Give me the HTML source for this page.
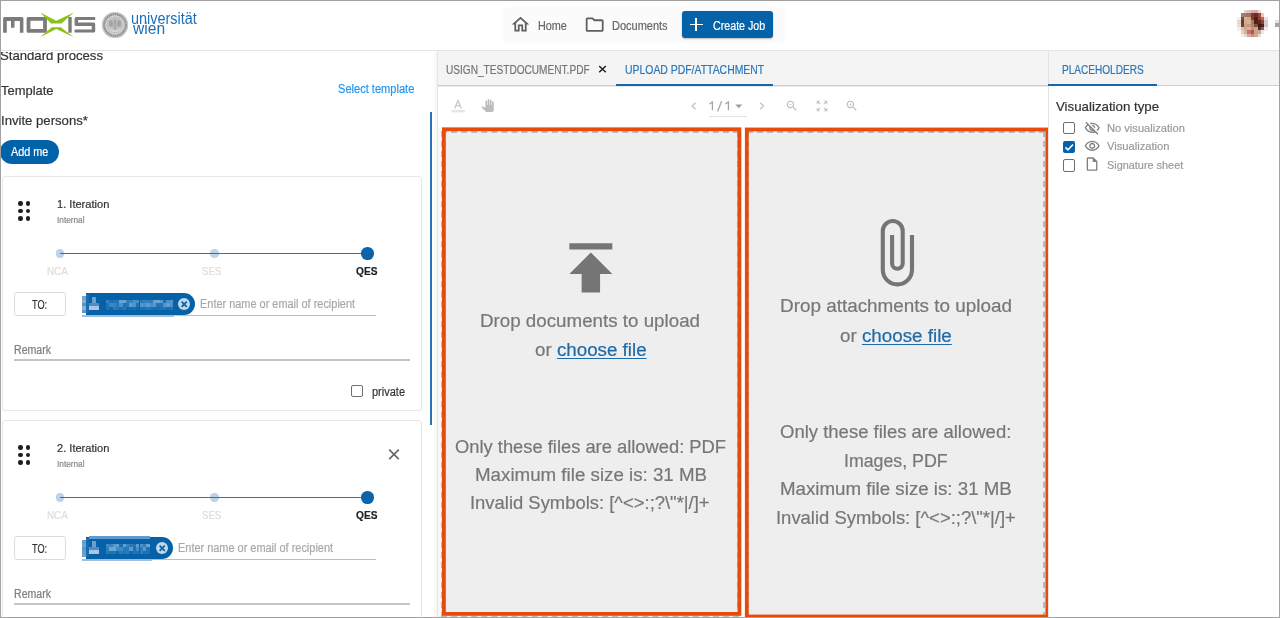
<!DOCTYPE html>
<html><head><meta charset="utf-8"><style>
html,body{margin:0;padding:0;}
body{width:1280px;height:618px;overflow:hidden;position:relative;background:#fff;font-family:"Liberation Sans",sans-serif;}
.t{position:absolute;white-space:nowrap;-webkit-text-stroke:0.2px currentColor;}
#frame{position:absolute;left:0;top:0;width:1280px;height:618px;border:1px solid #a2a2a2;box-sizing:border-box;pointer-events:none;z-index:50;}
</style></head><body>
<div id="left" style="position:absolute;left:0;top:0;width:437px;height:618px;overflow:hidden;">
<div class="t" style="left:0.00px;top:49.10px;font-size:13px;line-height:13px;color:#333;transform:scaleX(1.0109);transform-origin:0 0;">Standard process</div>
<div style="position:absolute;left:0px;top:51px;width:437px;height:1.2px;background:#fff;"></div>
<div class="t" style="left:0.50px;top:83.80px;font-size:13px;line-height:13px;color:#333;transform:scaleX(0.9952);transform-origin:0 0;">Template</div>
<div class="t" style="left:337.70px;top:83.40px;font-size:12px;line-height:12px;color:#2196f3;transform:scaleX(0.9224);transform-origin:0 0;">Select template</div>
<div class="t" style="left:0.50px;top:114.30px;font-size:13px;line-height:13px;color:#333;transform:scaleX(1.0105);transform-origin:0 0;">Invite persons*</div>
<div style="position:absolute;left:0px;top:140px;width:59px;height:24px;background:#0062a8;border-radius:12px;"></div>
<div class="t" style="left:10.50px;top:145.60px;font-size:12px;line-height:12px;color:#fff;transform:scaleX(0.9020);transform-origin:0 0;">Add me</div>
<div style="position:absolute;left:430px;top:112px;width:2px;height:313px;background:#2a74b3;"></div>
<div style="position:absolute;left:2px;top:176px;width:419.5px;height:234.5px;border:1px solid #e6e6e6;border-radius:3px;box-sizing:border-box;background:#fff;"></div>
<div style="position:absolute;left:18.0px;top:201.39999999999998px;width:4.6px;height:4.6px;background:#1e1e1e;border-radius:50%;"></div>
<div style="position:absolute;left:18.0px;top:208.7px;width:4.6px;height:4.6px;background:#1e1e1e;border-radius:50%;"></div>
<div style="position:absolute;left:18.0px;top:216.0px;width:4.6px;height:4.6px;background:#1e1e1e;border-radius:50%;"></div>
<div style="position:absolute;left:25.7px;top:201.39999999999998px;width:4.6px;height:4.6px;background:#1e1e1e;border-radius:50%;"></div>
<div style="position:absolute;left:25.7px;top:208.7px;width:4.6px;height:4.6px;background:#1e1e1e;border-radius:50%;"></div>
<div style="position:absolute;left:25.7px;top:216.0px;width:4.6px;height:4.6px;background:#1e1e1e;border-radius:50%;"></div>
<div class="t" style="left:57.00px;top:198.80px;font-size:11px;line-height:11px;color:#333;transform:scaleX(1.0063);transform-origin:0 0;">1. Iteration</div>
<div class="t" style="left:57.00px;top:216.20px;font-size:9px;line-height:9px;color:#888;transform:scaleX(0.9162);transform-origin:0 0;">Internal</div>
<div style="position:absolute;left:55.7px;top:249.4px;width:8.4px;height:8.4px;background:#bcd3e8;border-radius:50%;"></div>
<div style="position:absolute;left:210.4px;top:249.4px;width:8.4px;height:8.4px;background:#bcd3e8;border-radius:50%;"></div>
<div style="position:absolute;left:60px;top:252.8px;width:307px;height:1.6px;background:#2a72b3;"></div>
<div style="position:absolute;left:361px;top:247.3px;width:12.6px;height:12.6px;background:#0b63a9;border-radius:50%;"></div>
<div class="t" style="left:46.80px;top:266.00px;font-size:11px;line-height:11px;color:#dcdcdc;transform:scaleX(0.8914);transform-origin:0 0;">NCA</div>
<div class="t" style="left:202.00px;top:265.90px;font-size:11px;line-height:11px;color:#dcdcdc;transform:scaleX(0.8768);transform-origin:0 0;">SES</div>
<div class="t" style="left:356.00px;top:265.60px;font-size:11px;line-height:11px;color:#222;transform:scaleX(0.9211);transform-origin:0 0;font-weight:bold;">QES</div>
<div style="position:absolute;left:13.6px;top:292px;width:52px;height:24.3px;border:1px solid #dcdcdc;border-radius:3px;box-sizing:border-box;"></div>
<div class="t" style="left:32.20px;top:299.10px;font-size:12px;line-height:12px;color:#333;transform:scaleX(0.7636);transform-origin:0 0;">TO:</div>
<div style="position:absolute;left:86px;top:293px;width:108.8px;height:21.5px;background:#0562a8;border-radius:0 11px 11px 0;"></div>
<div style="position:absolute;left:82.3px;top:296.3px;width:3.4px;height:3.4px;background:rgba(5,98,168,0.56);"></div>
<div style="position:absolute;left:82.3px;top:299.6px;width:3.4px;height:3.4px;background:rgba(5,98,168,0.50);"></div>
<div style="position:absolute;left:82.3px;top:302.9px;width:3.4px;height:3.4px;background:rgba(5,98,168,0.68);"></div>
<div style="position:absolute;left:82.3px;top:306.2px;width:3.4px;height:3.4px;background:rgba(5,98,168,0.48);"></div>
<div style="position:absolute;left:82.3px;top:309.5px;width:3.4px;height:3.4px;background:rgba(5,98,168,0.64);"></div>
<div style="position:absolute;left:85.7px;top:294px;width:3.4px;height:19px;background:#1a6cae;"></div>
<div style="position:absolute;left:92.2px;top:296.5px;width:3.4px;height:6.6px;background:#6c9fcf;"></div>
<div style="position:absolute;left:88.8px;top:303.1px;width:10.2px;height:3.3px;background:#4f8cc4;"></div>
<div style="position:absolute;left:88.8px;top:306.4px;width:10.2px;height:3.3px;background:#a9c7e4;"></div>
<div style="position:absolute;left:106.0px;top:300.0px;width:3.4px;height:3.4px;background:rgba(140,190,232,0.37);"></div>
<div style="position:absolute;left:106.0px;top:303.3px;width:3.4px;height:3.4px;background:rgba(140,190,232,0.18);"></div>
<div style="position:absolute;left:106.0px;top:306.6px;width:3.4px;height:3.4px;background:rgba(140,190,232,0.18);"></div>
<div style="position:absolute;left:109.3px;top:300.0px;width:3.4px;height:3.4px;background:rgba(140,190,232,0.17);"></div>
<div style="position:absolute;left:109.3px;top:303.3px;width:3.4px;height:3.4px;background:rgba(140,190,232,0.41);"></div>
<div style="position:absolute;left:109.3px;top:306.6px;width:3.4px;height:3.4px;background:rgba(140,190,232,0.07);"></div>
<div style="position:absolute;left:112.7px;top:300.0px;width:3.4px;height:3.4px;background:rgba(140,190,232,0.20);"></div>
<div style="position:absolute;left:112.7px;top:303.3px;width:3.4px;height:3.4px;background:rgba(140,190,232,0.40);"></div>
<div style="position:absolute;left:112.7px;top:306.6px;width:3.4px;height:3.4px;background:rgba(140,190,232,0.26);"></div>
<div style="position:absolute;left:116.0px;top:300.0px;width:3.4px;height:3.4px;background:rgba(140,190,232,0.22);"></div>
<div style="position:absolute;left:116.0px;top:303.3px;width:3.4px;height:3.4px;background:rgba(140,190,232,0.28);"></div>
<div style="position:absolute;left:116.0px;top:306.6px;width:3.4px;height:3.4px;background:rgba(140,190,232,0.21);"></div>
<div style="position:absolute;left:119.4px;top:300.0px;width:3.4px;height:3.4px;background:rgba(140,190,232,0.72);"></div>
<div style="position:absolute;left:119.4px;top:303.3px;width:3.4px;height:3.4px;background:rgba(140,190,232,0.50);"></div>
<div style="position:absolute;left:119.4px;top:306.6px;width:3.4px;height:3.4px;background:rgba(140,190,232,0.15);"></div>
<div style="position:absolute;left:122.7px;top:300.0px;width:3.4px;height:3.4px;background:rgba(140,190,232,0.74);"></div>
<div style="position:absolute;left:122.7px;top:303.3px;width:3.4px;height:3.4px;background:rgba(140,190,232,0.18);"></div>
<div style="position:absolute;left:122.7px;top:306.6px;width:3.4px;height:3.4px;background:rgba(140,190,232,0.26);"></div>
<div style="position:absolute;left:126.1px;top:300.0px;width:3.4px;height:3.4px;background:rgba(140,190,232,0.32);"></div>
<div style="position:absolute;left:126.1px;top:303.3px;width:3.4px;height:3.4px;background:rgba(140,190,232,0.24);"></div>
<div style="position:absolute;left:126.1px;top:306.6px;width:3.4px;height:3.4px;background:rgba(140,190,232,0.08);"></div>
<div style="position:absolute;left:129.4px;top:300.0px;width:3.4px;height:3.4px;background:rgba(140,190,232,0.34);"></div>
<div style="position:absolute;left:129.4px;top:303.3px;width:3.4px;height:3.4px;background:rgba(140,190,232,0.64);"></div>
<div style="position:absolute;left:129.4px;top:306.6px;width:3.4px;height:3.4px;background:rgba(140,190,232,0.10);"></div>
<div style="position:absolute;left:132.8px;top:300.0px;width:3.4px;height:3.4px;background:rgba(140,190,232,0.50);"></div>
<div style="position:absolute;left:132.8px;top:303.3px;width:3.4px;height:3.4px;background:rgba(140,190,232,0.53);"></div>
<div style="position:absolute;left:132.8px;top:306.6px;width:3.4px;height:3.4px;background:rgba(140,190,232,0.14);"></div>
<div style="position:absolute;left:136.1px;top:300.0px;width:3.4px;height:3.4px;background:rgba(140,190,232,0.48);"></div>
<div style="position:absolute;left:136.1px;top:303.3px;width:3.4px;height:3.4px;background:rgba(140,190,232,0.19);"></div>
<div style="position:absolute;left:136.1px;top:306.6px;width:3.4px;height:3.4px;background:rgba(140,190,232,0.06);"></div>
<div style="position:absolute;left:139.5px;top:300.0px;width:3.4px;height:3.4px;background:rgba(140,190,232,0.27);"></div>
<div style="position:absolute;left:139.5px;top:303.3px;width:3.4px;height:3.4px;background:rgba(140,190,232,0.56);"></div>
<div style="position:absolute;left:139.5px;top:306.6px;width:3.4px;height:3.4px;background:rgba(140,190,232,0.16);"></div>
<div style="position:absolute;left:142.8px;top:300.0px;width:3.4px;height:3.4px;background:rgba(140,190,232,0.34);"></div>
<div style="position:absolute;left:142.8px;top:303.3px;width:3.4px;height:3.4px;background:rgba(140,190,232,0.50);"></div>
<div style="position:absolute;left:142.8px;top:306.6px;width:3.4px;height:3.4px;background:rgba(140,190,232,0.16);"></div>
<div style="position:absolute;left:146.2px;top:300.0px;width:3.4px;height:3.4px;background:rgba(140,190,232,0.33);"></div>
<div style="position:absolute;left:146.2px;top:303.3px;width:3.4px;height:3.4px;background:rgba(140,190,232,0.63);"></div>
<div style="position:absolute;left:146.2px;top:306.6px;width:3.4px;height:3.4px;background:rgba(140,190,232,0.22);"></div>
<div style="position:absolute;left:149.5px;top:300.0px;width:3.4px;height:3.4px;background:rgba(140,190,232,0.30);"></div>
<div style="position:absolute;left:149.5px;top:303.3px;width:3.4px;height:3.4px;background:rgba(140,190,232,0.49);"></div>
<div style="position:absolute;left:149.5px;top:306.6px;width:3.4px;height:3.4px;background:rgba(140,190,232,0.18);"></div>
<div style="position:absolute;left:152.9px;top:300.0px;width:3.4px;height:3.4px;background:rgba(140,190,232,0.68);"></div>
<div style="position:absolute;left:152.9px;top:303.3px;width:3.4px;height:3.4px;background:rgba(140,190,232,0.59);"></div>
<div style="position:absolute;left:152.9px;top:306.6px;width:3.4px;height:3.4px;background:rgba(140,190,232,0.12);"></div>
<div style="position:absolute;left:156.2px;top:300.0px;width:3.4px;height:3.4px;background:rgba(140,190,232,0.74);"></div>
<div style="position:absolute;left:156.2px;top:303.3px;width:3.4px;height:3.4px;background:rgba(140,190,232,0.22);"></div>
<div style="position:absolute;left:156.2px;top:306.6px;width:3.4px;height:3.4px;background:rgba(140,190,232,0.15);"></div>
<div style="position:absolute;left:159.6px;top:300.0px;width:3.4px;height:3.4px;background:rgba(140,190,232,0.60);"></div>
<div style="position:absolute;left:159.6px;top:303.3px;width:3.4px;height:3.4px;background:rgba(140,190,232,0.24);"></div>
<div style="position:absolute;left:159.6px;top:306.6px;width:3.4px;height:3.4px;background:rgba(140,190,232,0.17);"></div>
<div style="position:absolute;left:162.9px;top:300.0px;width:3.4px;height:3.4px;background:rgba(140,190,232,0.17);"></div>
<div style="position:absolute;left:162.9px;top:303.3px;width:3.4px;height:3.4px;background:rgba(140,190,232,0.55);"></div>
<div style="position:absolute;left:162.9px;top:306.6px;width:3.4px;height:3.4px;background:rgba(140,190,232,0.24);"></div>
<div style="position:absolute;left:166.3px;top:300.0px;width:3.4px;height:3.4px;background:rgba(140,190,232,0.49);"></div>
<div style="position:absolute;left:166.3px;top:303.3px;width:3.4px;height:3.4px;background:rgba(140,190,232,0.68);"></div>
<div style="position:absolute;left:166.3px;top:306.6px;width:3.4px;height:3.4px;background:rgba(140,190,232,0.13);"></div>
<div style="position:absolute;left:169.6px;top:300.0px;width:3.4px;height:3.4px;background:rgba(140,190,232,0.57);"></div>
<div style="position:absolute;left:169.6px;top:303.3px;width:3.4px;height:3.4px;background:rgba(140,190,232,0.51);"></div>
<div style="position:absolute;left:169.6px;top:306.6px;width:3.4px;height:3.4px;background:rgba(140,190,232,0.19);"></div>
<div style="position:absolute;left:82.3px;top:314.5px;width:91.5px;height:2.3px;background:#9fbcd9;"></div>
<div style="position:absolute;left:177.90000000000003px;top:297.6px;width:12.4px;height:12.4px;background:#c3d7ea;border-radius:50%;"></div>
<svg style="position:absolute;left:177.90px;top:297.60px" width="12.4" height="12.4" viewBox="0 0 12.4 12.4"><path d="M3.6 3.6L8.8 8.8M8.8 3.6L3.6 8.8" stroke="#0562a8" stroke-width="1.7"/></svg>
<div class="t" style="left:199.80px;top:297.70px;font-size:12px;line-height:12px;color:#a8a8a8;transform:scaleX(0.9114);transform-origin:0 0;">Enter name or email of recipient</div>
<div style="position:absolute;left:173.8px;top:315px;width:202.2px;height:1px;background:#bdbdbd;"></div>
<div class="t" style="left:13.90px;top:343.60px;font-size:12px;line-height:12px;color:#7c7c7c;transform:scaleX(0.8802);transform-origin:0 0;">Remark</div>
<div style="position:absolute;left:13.9px;top:359px;width:396.3px;height:1.6px;background:#c4c4c4;"></div>
<div style="position:absolute;left:351px;top:384.7px;width:12px;height:12px;border:1.7px solid #6e6e6e;border-radius:2px;box-sizing:border-box;"></div>
<div class="t" style="left:371.70px;top:385.80px;font-size:12px;line-height:12px;color:#333;transform:scaleX(0.9164);transform-origin:0 0;">private</div>
<div style="position:absolute;left:2px;top:420px;width:419.5px;height:234.5px;border:1px solid #e6e6e6;border-radius:3px;box-sizing:border-box;background:#fff;"></div>
<div style="position:absolute;left:18.0px;top:445.4px;width:4.6px;height:4.6px;background:#1e1e1e;border-radius:50%;"></div>
<div style="position:absolute;left:18.0px;top:452.7px;width:4.6px;height:4.6px;background:#1e1e1e;border-radius:50%;"></div>
<div style="position:absolute;left:18.0px;top:460.0px;width:4.6px;height:4.6px;background:#1e1e1e;border-radius:50%;"></div>
<div style="position:absolute;left:25.7px;top:445.4px;width:4.6px;height:4.6px;background:#1e1e1e;border-radius:50%;"></div>
<div style="position:absolute;left:25.7px;top:452.7px;width:4.6px;height:4.6px;background:#1e1e1e;border-radius:50%;"></div>
<div style="position:absolute;left:25.7px;top:460.0px;width:4.6px;height:4.6px;background:#1e1e1e;border-radius:50%;"></div>
<div class="t" style="left:57.00px;top:442.80px;font-size:11px;line-height:11px;color:#333;transform:scaleX(1.0063);transform-origin:0 0;">2. Iteration</div>
<div class="t" style="left:57.00px;top:460.20px;font-size:9px;line-height:9px;color:#888;transform:scaleX(0.9162);transform-origin:0 0;">Internal</div>
<div style="position:absolute;left:55.7px;top:493.4px;width:8.4px;height:8.4px;background:#bcd3e8;border-radius:50%;"></div>
<div style="position:absolute;left:210.4px;top:493.4px;width:8.4px;height:8.4px;background:#bcd3e8;border-radius:50%;"></div>
<div style="position:absolute;left:60px;top:496.8px;width:307px;height:1.6px;background:#2a72b3;"></div>
<div style="position:absolute;left:361px;top:491.3px;width:12.6px;height:12.6px;background:#0b63a9;border-radius:50%;"></div>
<div class="t" style="left:46.80px;top:510.00px;font-size:11px;line-height:11px;color:#dcdcdc;transform:scaleX(0.8914);transform-origin:0 0;">NCA</div>
<div class="t" style="left:202.00px;top:509.90px;font-size:11px;line-height:11px;color:#dcdcdc;transform:scaleX(0.8768);transform-origin:0 0;">SES</div>
<div class="t" style="left:356.00px;top:509.60px;font-size:11px;line-height:11px;color:#222;transform:scaleX(0.9211);transform-origin:0 0;font-weight:bold;">QES</div>
<div style="position:absolute;left:13.6px;top:536px;width:52px;height:24.3px;border:1px solid #dcdcdc;border-radius:3px;box-sizing:border-box;"></div>
<div class="t" style="left:32.20px;top:543.10px;font-size:12px;line-height:12px;color:#333;transform:scaleX(0.7636);transform-origin:0 0;">TO:</div>
<div style="position:absolute;left:86px;top:537px;width:87.0px;height:21.5px;background:#0562a8;border-radius:0 11px 11px 0;"></div>
<div style="position:absolute;left:82.3px;top:540.3px;width:3.4px;height:3.4px;background:rgba(5,98,168,0.61);"></div>
<div style="position:absolute;left:82.3px;top:543.6px;width:3.4px;height:3.4px;background:rgba(5,98,168,0.58);"></div>
<div style="position:absolute;left:82.3px;top:546.9px;width:3.4px;height:3.4px;background:rgba(5,98,168,0.65);"></div>
<div style="position:absolute;left:82.3px;top:550.2px;width:3.4px;height:3.4px;background:rgba(5,98,168,0.61);"></div>
<div style="position:absolute;left:82.3px;top:553.5px;width:3.4px;height:3.4px;background:rgba(5,98,168,0.59);"></div>
<div style="position:absolute;left:85.7px;top:538px;width:3.4px;height:19px;background:#1a6cae;"></div>
<div style="position:absolute;left:92.2px;top:540.5px;width:3.4px;height:6.6px;background:#6c9fcf;"></div>
<div style="position:absolute;left:88.8px;top:547.1px;width:10.2px;height:3.3px;background:#4f8cc4;"></div>
<div style="position:absolute;left:88.8px;top:550.4px;width:10.2px;height:3.3px;background:#a9c7e4;"></div>
<div style="position:absolute;left:106.0px;top:544.0px;width:3.4px;height:3.4px;background:rgba(140,190,232,0.44);"></div>
<div style="position:absolute;left:106.0px;top:547.3px;width:3.4px;height:3.4px;background:rgba(140,190,232,0.31);"></div>
<div style="position:absolute;left:106.0px;top:550.6px;width:3.4px;height:3.4px;background:rgba(140,190,232,0.28);"></div>
<div style="position:absolute;left:109.3px;top:544.0px;width:3.4px;height:3.4px;background:rgba(140,190,232,0.39);"></div>
<div style="position:absolute;left:109.3px;top:547.3px;width:3.4px;height:3.4px;background:rgba(140,190,232,0.74);"></div>
<div style="position:absolute;left:109.3px;top:550.6px;width:3.4px;height:3.4px;background:rgba(140,190,232,0.18);"></div>
<div style="position:absolute;left:112.7px;top:544.0px;width:3.4px;height:3.4px;background:rgba(140,190,232,0.59);"></div>
<div style="position:absolute;left:112.7px;top:547.3px;width:3.4px;height:3.4px;background:rgba(140,190,232,0.75);"></div>
<div style="position:absolute;left:112.7px;top:550.6px;width:3.4px;height:3.4px;background:rgba(140,190,232,0.20);"></div>
<div style="position:absolute;left:116.0px;top:544.0px;width:3.4px;height:3.4px;background:rgba(140,190,232,0.69);"></div>
<div style="position:absolute;left:116.0px;top:547.3px;width:3.4px;height:3.4px;background:rgba(140,190,232,0.42);"></div>
<div style="position:absolute;left:116.0px;top:550.6px;width:3.4px;height:3.4px;background:rgba(140,190,232,0.09);"></div>
<div style="position:absolute;left:119.4px;top:544.0px;width:3.4px;height:3.4px;background:rgba(140,190,232,0.15);"></div>
<div style="position:absolute;left:119.4px;top:547.3px;width:3.4px;height:3.4px;background:rgba(140,190,232,0.44);"></div>
<div style="position:absolute;left:119.4px;top:550.6px;width:3.4px;height:3.4px;background:rgba(140,190,232,0.25);"></div>
<div style="position:absolute;left:122.7px;top:544.0px;width:3.4px;height:3.4px;background:rgba(140,190,232,0.67);"></div>
<div style="position:absolute;left:122.7px;top:547.3px;width:3.4px;height:3.4px;background:rgba(140,190,232,0.27);"></div>
<div style="position:absolute;left:122.7px;top:550.6px;width:3.4px;height:3.4px;background:rgba(140,190,232,0.20);"></div>
<div style="position:absolute;left:126.1px;top:544.0px;width:3.4px;height:3.4px;background:rgba(140,190,232,0.40);"></div>
<div style="position:absolute;left:126.1px;top:547.3px;width:3.4px;height:3.4px;background:rgba(140,190,232,0.25);"></div>
<div style="position:absolute;left:126.1px;top:550.6px;width:3.4px;height:3.4px;background:rgba(140,190,232,0.29);"></div>
<div style="position:absolute;left:129.4px;top:544.0px;width:3.4px;height:3.4px;background:rgba(140,190,232,0.27);"></div>
<div style="position:absolute;left:129.4px;top:547.3px;width:3.4px;height:3.4px;background:rgba(140,190,232,0.63);"></div>
<div style="position:absolute;left:129.4px;top:550.6px;width:3.4px;height:3.4px;background:rgba(140,190,232,0.09);"></div>
<div style="position:absolute;left:132.8px;top:544.0px;width:3.4px;height:3.4px;background:rgba(140,190,232,0.22);"></div>
<div style="position:absolute;left:132.8px;top:547.3px;width:3.4px;height:3.4px;background:rgba(140,190,232,0.16);"></div>
<div style="position:absolute;left:132.8px;top:550.6px;width:3.4px;height:3.4px;background:rgba(140,190,232,0.21);"></div>
<div style="position:absolute;left:136.1px;top:544.0px;width:3.4px;height:3.4px;background:rgba(140,190,232,0.63);"></div>
<div style="position:absolute;left:136.1px;top:547.3px;width:3.4px;height:3.4px;background:rgba(140,190,232,0.47);"></div>
<div style="position:absolute;left:136.1px;top:550.6px;width:3.4px;height:3.4px;background:rgba(140,190,232,0.20);"></div>
<div style="position:absolute;left:139.5px;top:544.0px;width:3.4px;height:3.4px;background:rgba(140,190,232,0.51);"></div>
<div style="position:absolute;left:139.5px;top:547.3px;width:3.4px;height:3.4px;background:rgba(140,190,232,0.28);"></div>
<div style="position:absolute;left:139.5px;top:550.6px;width:3.4px;height:3.4px;background:rgba(140,190,232,0.29);"></div>
<div style="position:absolute;left:142.8px;top:544.0px;width:3.4px;height:3.4px;background:rgba(140,190,232,0.33);"></div>
<div style="position:absolute;left:142.8px;top:547.3px;width:3.4px;height:3.4px;background:rgba(140,190,232,0.59);"></div>
<div style="position:absolute;left:142.8px;top:550.6px;width:3.4px;height:3.4px;background:rgba(140,190,232,0.16);"></div>
<div style="position:absolute;left:146.2px;top:544.0px;width:3.4px;height:3.4px;background:rgba(140,190,232,0.73);"></div>
<div style="position:absolute;left:146.2px;top:547.3px;width:3.4px;height:3.4px;background:rgba(140,190,232,0.19);"></div>
<div style="position:absolute;left:146.2px;top:550.6px;width:3.4px;height:3.4px;background:rgba(140,190,232,0.16);"></div>
<div style="position:absolute;left:88.5px;top:535.5px;width:61.7px;height:3px;background:#5f9bd0;"></div>
<div style="position:absolute;left:82.3px;top:558.5px;width:69.7px;height:2.3px;background:#9fbcd9;"></div>
<div style="position:absolute;left:156.10000000000002px;top:541.6px;width:12.4px;height:12.4px;background:#c3d7ea;border-radius:50%;"></div>
<svg style="position:absolute;left:156.10px;top:541.60px" width="12.4" height="12.4" viewBox="0 0 12.4 12.4"><path d="M3.6 3.6L8.8 8.8M8.8 3.6L3.6 8.8" stroke="#0562a8" stroke-width="1.7"/></svg>
<div class="t" style="left:178.00px;top:541.70px;font-size:12px;line-height:12px;color:#a8a8a8;transform:scaleX(0.9114);transform-origin:0 0;">Enter name or email of recipient</div>
<div style="position:absolute;left:152.0px;top:559px;width:224.0px;height:1px;background:#bdbdbd;"></div>
<div class="t" style="left:13.90px;top:587.60px;font-size:12px;line-height:12px;color:#7c7c7c;transform:scaleX(0.8802);transform-origin:0 0;">Remark</div>
<div style="position:absolute;left:13.9px;top:603px;width:396.3px;height:1.6px;background:#c4c4c4;"></div>
<svg style="position:absolute;left:388px;top:448px" width="12" height="12" viewBox="0 0 12 12"><path d="M1.2 1.6L10.8 11.1M10.8 1.6L1.2 11.1" stroke="#666" stroke-width="1.6"/></svg>
</div>
<div id="mid">
<div style="position:absolute;left:437px;top:51px;width:843px;height:567px;background:#fff;"></div>
<div style="position:absolute;left:433px;top:53px;width:4px;height:565px;background:linear-gradient(to right,rgba(0,0,0,0),rgba(0,0,0,0.045));"></div>
<div style="position:absolute;left:437px;top:51px;width:1px;height:567px;background:#e6e6e6;"></div>
<div style="position:absolute;left:438px;top:51px;width:610px;height:34px;background:#f4f4f4;"></div>
<div style="position:absolute;left:438px;top:85px;width:610px;height:1px;background:#cfcfcf;"></div>
<div style="position:absolute;left:438px;top:86px;width:610px;height:1px;background:#eaeaea;"></div>
<div class="t" style="left:446.00px;top:63.75px;font-size:12px;line-height:12px;color:#757575;transform:scaleX(0.8414);transform-origin:0 0;">USIGN_TESTDOCUMENT.PDF</div>
<svg style="position:absolute;left:598px;top:65px" width="9" height="8" viewBox="0 0 9 8"><path d="M1.2 1L7.8 7.2M7.8 1L1.2 7.2" stroke="#222" stroke-width="1.5"/></svg>
<div class="t" style="left:624.80px;top:63.60px;font-size:12px;line-height:12px;color:#2a78ba;transform:scaleX(0.8687);transform-origin:0 0;">UPLOAD PDF/ATTACHMENT</div>
<div style="position:absolute;left:616px;top:84px;width:157px;height:2px;background:#1867ad;"></div>
<svg style="position:absolute;left:450px;top:98px" width="16" height="16" viewBox="0 0 16 16">
<path d="M4.6 10.4L8 2.6L11.4 10.4M5.8 7.6H10.2" fill="none" stroke="#c8c8c8" stroke-width="1.3"/>
<rect x="1.3" y="12" width="13.6" height="2.4" fill="#e6e6e6"/></svg>
<svg style="position:absolute;left:481.3px;top:99px" width="13.3" height="13.3" viewBox="0 0 24 24"><path d="M23 5.5V20c0 2.2-1.8 4-4 4h-7.3c-1.08 0-2.1-.43-2.850-1.19L1 14.83s1.26-1.23 1.3-1.250c.22-.19.49-.29.79-.29.22 0 .42.06.6.16.04.01 4.31 2.46 4.31 2.46V4c0-.83.67-1.5 1.5-1.5S11 3.17 11 4v7h1V1.5c0-.83.67-1.5 1.5-1.5S15 .67 15 1.5V11h1V2.5c0-.83.67-1.5 1.5-1.5s1.5.67 1.5 1.5V11h1V5.5c0-.83.67-1.5 1.5-1.5s1.5.67 1.5 1.5z" fill="#bcbcbc"/></svg>
<svg style="position:absolute;left:688px;top:101px" width="10" height="10" viewBox="0 0 10 10"><path d="M7.6 1.8L4 5L7.6 8.2" fill="none" stroke="#c2c2c2" stroke-width="1.2"/></svg>
<svg style="position:absolute;left:700px;top:95px" width="40" height="20" viewBox="700 95 40 20"><path d="M712.4 110.2V101.9L709.4 103.9M728.4 110.2V101.9L725.4 103.9M721.6 101.3L717.6 111.4" fill="none" stroke="#a4a4a4" stroke-width="1.25"/></svg>
<svg style="position:absolute;left:735px;top:103.5px" width="8" height="5" viewBox="0 0 8 5"><path d="M0.3 0.5H7.3L3.8 4.3Z" fill="#9e9e9e"/></svg>
<div style="position:absolute;left:708.5px;top:116px;width:38.3px;height:1px;background:#e4e4e4;"></div>
<svg style="position:absolute;left:757px;top:101px" width="10" height="10" viewBox="0 0 10 10"><path d="M3 1.8L6.6 5L3 8.2" fill="none" stroke="#c2c2c2" stroke-width="1.2"/></svg>
<svg style="position:absolute;left:785px;top:98.5px" width="13.7" height="13.7" viewBox="0 0 24 24"><path d="M15.5 14h-.79l-.28-.27C15.41 12.590 16 11.11 16 9.5 16 5.910 13.09 3 9.5 3S3 5.91 3 9.5 5.91 16 9.5 16c1.61 0 3.09-.59 4.23-1.57l.27.28v.79l5 4.99L20.49 19l-4.99-5zm-6 0C7.01 14 5 11.99 5 9.5S7.01 5 9.5 5 14 7.01 14 9.5 11.99 14 9.5 14zM7 9h5v1H7z" fill="#bdbdbd"/></svg>
<svg style="position:absolute;left:845.2px;top:98.5px" width="13.7" height="13.7" viewBox="0 0 24 24"><path d="M15.5 14h-.79l-.28-.27C15.41 12.590 16 11.11 16 9.5 16 5.910 13.09 3 9.5 3S3 5.91 3 9.5 5.91 16 9.5 16c1.61 0 3.09-.59 4.23-1.57l.27.28v.79l5 4.99L20.49 19l-4.99-5zm-6 0C7.01 14 5 11.99 5 9.5S7.01 5 9.5 5 14 7.01 14 9.5 11.99 14 9.5 14zM12 10h-2v2H9v-2H7V9h2V7h1v2h2v1z" fill="#bdbdbd"/></svg>
<svg style="position:absolute;left:815px;top:98.75px" width="14" height="14" viewBox="0 0 24 24"><path d="M15 3l2.3 2.3-2.89 2.87 1.42 1.42L18.7 6.7 21 9V3zM3 9l2.3-2.3 2.87 2.89 1.420-1.42L6.7 5.3 9 3H3zm6 12l-2.3-2.3 2.89-2.87-1.42-1.42L5.3 17.3 3 15v6zm12-6l-2.3 2.3-2.87-2.89-1.42 1.42 2.89 2.87L15 21h6z" fill="#c4c4c4"/></svg>
<div style="position:absolute;left:437.5px;top:127px;width:611px;height:491px;background:#f7f7f7;"></div>
<div style="position:absolute;left:741.5px;top:127px;width:3.5px;height:491px;background:#fff;"></div>
<div style="position:absolute;left:440.8px;top:130.5px;width:298.5px;height:487px;background:#eeeeee;border:2px dashed #b9b9b9;box-sizing:border-box;"></div>
<div style="position:absolute;left:747.3px;top:130.5px;width:298px;height:487px;background:#eeeeee;border:2px dashed #b9b9b9;box-sizing:border-box;"></div>
<svg style="position:absolute;left:0;top:0" width="1280" height="618" viewBox="0 0 1280 618"><rect x="443.9" y="129.3" width="295.5" height="484.6" fill="none" stroke="#e64b0b" stroke-width="3.8"/><rect x="746.8" y="129.5" width="300.5" height="487" fill="none" stroke="#e64b0b" stroke-width="3.8"/></svg>
<svg style="position:absolute;left:553.6px;top:230.7px" width="73.7" height="73.7" viewBox="0 0 24 24"><path d="M5 4v2h14V4H5zm0 10h4v6h6v-6h4l-7-7-7 7z" fill="#757575"/></svg>
<svg style="position:absolute;left:870px;top:210px" width="60" height="90" viewBox="870 210 60 90"><path d="M892.1 234.9V263.5A5.3 5.3 0 0 0 902.7 263.5V231A9.95 9.95 0 0 0 882.8 231V269.8A14.6 14.6 0 0 0 912 269.8V234.9" fill="none" stroke="#757575" stroke-width="4.1"/></svg>
<div class="t" style="left:480.30px;top:311.85px;font-size:18px;line-height:18px;color:#777;transform:scaleX(1.0420);transform-origin:0 0;">Drop documents to upload</div>
<div class="t" style="left:534.70px;top:340.90px;font-size:18px;line-height:18px;color:#777;transform:scaleX(1.0424);transform-origin:0 0;">or <span style="color:#1d6aa8;text-decoration:underline;text-underline-offset:2px">choose file</span></div>
<div class="t" style="left:454.70px;top:437.80px;font-size:18px;line-height:18px;color:#777;transform:scaleX(1.0184);transform-origin:0 0;">Only these files are allowed: PDF</div>
<div class="t" style="left:474.50px;top:465.90px;font-size:18px;line-height:18px;color:#777;transform:scaleX(1.0405);transform-origin:0 0;">Maximum file size is: 31 MB</div>
<div class="t" style="left:470.40px;top:494.00px;font-size:18px;line-height:18px;color:#777;transform:scaleX(1.0234);transform-origin:0 0;">Invalid Symbols: [^&lt;&gt;:;?\"*|/]+</div>
<div class="t" style="left:779.75px;top:297.40px;font-size:18px;line-height:18px;color:#777;transform:scaleX(1.0489);transform-origin:0 0;">Drop attachments to upload</div>
<div class="t" style="left:840.00px;top:326.50px;font-size:18px;line-height:18px;color:#777;transform:scaleX(1.0442);transform-origin:0 0;">or <span style="color:#1d6aa8;text-decoration:underline;text-underline-offset:2px">choose file</span></div>
<div class="t" style="left:779.70px;top:422.90px;font-size:18px;line-height:18px;color:#777;transform:scaleX(1.0275);transform-origin:0 0;">Only these files are allowed:</div>
<div class="t" style="left:843.90px;top:452.00px;font-size:18px;line-height:18px;color:#777;transform:scaleX(0.9864);transform-origin:0 0;">Images, PDF</div>
<div class="t" style="left:779.70px;top:480.10px;font-size:18px;line-height:18px;color:#777;transform:scaleX(1.0392);transform-origin:0 0;">Maximum file size is: 31 MB</div>
<div class="t" style="left:775.90px;top:509.20px;font-size:18px;line-height:18px;color:#777;transform:scaleX(1.0242);transform-origin:0 0;">Invalid Symbols: [^&lt;&gt;:;?\"*|/]+</div>
</div>
<div id="rp">
<div style="position:absolute;left:1048px;top:51px;width:232px;height:567px;background:#fff;"></div>
<div style="position:absolute;left:1048px;top:51px;width:1px;height:567px;background:#e2e2e2;"></div>
<div style="position:absolute;left:1049px;top:51px;width:231px;height:34px;background:#f4f4f4;"></div>
<div style="position:absolute;left:1049px;top:85px;width:231px;height:1px;background:#cfcfcf;"></div>
<div class="t" style="left:1062.00px;top:63.80px;font-size:12px;line-height:12px;color:#2a78ba;transform:scaleX(0.8381);transform-origin:0 0;">PLACEHOLDERS</div>
<div style="position:absolute;left:1048.2px;top:84px;width:109px;height:2px;background:#1867ad;"></div>
<div class="t" style="left:1055.80px;top:100.20px;font-size:13.5px;line-height:13.5px;color:#333;transform:scaleX(0.9836);transform-origin:0 0;">Visualization type</div>
<div style="position:absolute;left:1063.2px;top:122.1px;width:12.3px;height:12.3px;border:1.7px solid #6e6e6e;border-radius:2px;box-sizing:border-box;"></div>
<div class="t" style="left:1107.30px;top:123.00px;font-size:11.5px;line-height:11.5px;color:#9a9a9a;transform:scaleX(0.9673);transform-origin:0 0;">No visualization</div>
<div style="position:absolute;left:1063.2px;top:140.7px;width:12.3px;height:12.3px;background:#0562a8;border-radius:2px;"></div>
<svg style="position:absolute;left:1063.2px;top:140.7px" width="12.3" height="12.3" viewBox="0 0 12 12"><path d="M2.4 6.2L4.8 8.6L9.8 3.4" fill="none" stroke="#fff" stroke-width="1.6"/></svg>
<div class="t" style="left:1107.30px;top:141.30px;font-size:11.5px;line-height:11.5px;color:#9a9a9a;transform:scaleX(0.9712);transform-origin:0 0;">Visualization</div>
<div style="position:absolute;left:1063.2px;top:159.3px;width:12.3px;height:12.3px;border:1.7px solid #6e6e6e;border-radius:2px;box-sizing:border-box;"></div>
<div class="t" style="left:1107.30px;top:159.60px;font-size:11.5px;line-height:11.5px;color:#9a9a9a;transform:scaleX(0.9459);transform-origin:0 0;">Signature sheet</div>
<svg style="position:absolute;left:1083.6px;top:119.6px" width="16.4" height="16.4" viewBox="0 0 24 24"><path d="M12 6c3.79 0 7.17 2.13 8.82 5.5-.59 1.22-1.42 2.27-2.41 3.12l1.41 1.41c1.39-1.23 2.49-2.77 3.18-4.53C21.27 7.11 17 4 12 4c-1.27 0-2.49.2-3.64.57l1.65 1.65C10.66 6.09 11.32 6 12 6zm-1.07 1.14L13 9.21c.57.25 1.03.71 1.28 1.28l2.07 2.07c.08-.34.14-.7.14-1.07C16.5 9.01 14.48 7 12 7c-.37 0-.72.05-1.07.14zM2.01 3.87l2.68 2.68C3.06 7.83 1.77 9.53 1 11.5 2.73 15.89 7 19 12 19c1.52 0 2.98-.29 4.32-.82l3.42 3.42 1.41-1.41L3.42 2.45 2.01 3.87zm7.5 7.5l2.61 2.61c-.04.01-.08.02-.12.02-1.38 0-2.5-1.12-2.5-2.5 0-.05.01-.08.01-.13zm-3.4-3.4l1.75 1.75c-.23.55-.36 1.15-.36 1.78 0 2.48 2.02 4.5 4.5 4.5.63 0 1.23-.13 1.77-.36l.98.98c-.88.24-1.8.38-2.75.38-3.79 0-7.17-2.13-8.82-5.5.7-1.43 1.72-2.61 2.93-3.53z" fill="#808080"/></svg>
<svg style="position:absolute;left:1083.6px;top:138px" width="16.4" height="16.4" viewBox="0 0 24 24"><path d="M12 6c3.79 0 7.17 2.13 8.82 5.5C19.17 14.87 15.79 17 12 17s-7.17-2.13-8.82-5.5C4.83 8.13 8.21 6 12 6m0-2C7 4 2.73 7.11 1 11.5 2.73 15.89 7 19 12 19s9.27-3.11 11-7.5C21.27 7.11 17 4 12 4zm0 5c1.38 0 2.5 1.12 2.5 2.5S13.38 14 12 14s-2.5-1.12-2.5-2.5S10.62 9 12 9m0-2c-2.48 0-4.5 2.02-4.5 4.5S9.52 16 12 16s4.5-2.02 4.5-4.5S14.48 7 12 7z" fill="#808080"/></svg>
<svg style="position:absolute;left:1083.5px;top:156.4px" width="16.1" height="16.1" viewBox="0 0 24 24"><path d="M14 2H6c-1.1 0-1.99.9-1.99 2L4 20c0 1.1.89 2 1.99 2H18c1.1 0 2-.9 2-2V8l-6-6zM6 20V4h7v5h5v11H6z" fill="#808080"/></svg>
</div>
<div id="hdr" style="position:absolute;left:0;top:0;width:1280px;height:51px;z-index:10;">
<div style="position:absolute;left:0px;top:0px;width:1280px;height:50px;background:#fff;"></div>
<div style="position:absolute;left:0px;top:50px;width:1280px;height:1px;background:#e3e3e3;"></div>
<svg style="position:absolute;left:0;top:0" width="100" height="50" viewBox="0 0 100 50">
<g fill="#7b7b7b">
<path d="M3.1 32.7V18.6q0-1.5 1.5-1.5H21.9q1.5 0 1.5 1.5V32.7H19.9V20.9H14.5V27.7H11V20.9H6.8V32.7Z"/>
<path d="M28.1 17.1H45.4q1.5 0 1.5 1.5V31.2q0 1.5-1.5 1.5H28.1q-1.5 0-1.5-1.5V18.6q0-1.5 1.5-1.5ZM30.4 20.8V28.9H43.1V20.8Z"/>
<rect x="68.3" y="17" width="3.4" height="15.7"/>
<path d="M76.1 17H95.2V19.9H78.1V22.4H93.7q1.5 0 1.5 1.5V31.1q0 1.5-1.5 1.5H74.6V29.5H91.7V26.0H76.1q-1.5 0-1.5-1.5V18.5q0-1.5 1.5-1.5Z"/>
</g>
<g fill="#8cc21c">
<path d="M40.2 12.4L56.3 20.8L73.8 12.4L61.5 23.6H51Z"/>
<path d="M40.2 37.2L51.8 27.3H60.8L73.8 37.2L56.3 28.9Z"/>
</g></svg>
<svg style="position:absolute;left:101px;top:10.5px" width="28" height="28" viewBox="0 0 28 28">
<circle cx="14" cy="14" r="13.1" fill="#b6b6b6"/>
<circle cx="14" cy="14" r="12.4" fill="none" stroke="#d4d4d4" stroke-width="0.8"/>
<circle cx="14" cy="14" r="10.8" fill="none" stroke="#8e8e8e" stroke-width="2.2" stroke-dasharray="1.3 0.9"/>
<circle cx="14" cy="14" r="9.1" fill="none" stroke="#e4e4e4" stroke-width="0.9"/>
<circle cx="14" cy="14" r="8.6" fill="#c2c2c2"/>
<path d="M8 10.5Q9.5 8.5 11.5 10L12 15Q10 16.5 8 15Z" fill="#a3a3a3"/>
<path d="M20 10.5Q18.5 8.5 16.5 10L16 15Q18 16.5 20 15Z" fill="#a3a3a3"/>
<path d="M12.6 8.5H15.4L15.2 18.5H12.8Z" fill="#a8a8a8"/>
<path d="M8 18.2Q14 22.5 20 18.2" fill="none" stroke="#d8d8d8" stroke-width="1.6"/>
</svg>
<div class="t" style="left:131.30px;top:11.25px;font-size:16px;line-height:16px;color:#1b6fb5;transform:scaleX(0.9023);transform-origin:0 0;-webkit-text-stroke:0;">universität</div>
<div class="t" style="left:132.93px;top:21.40px;font-size:16px;line-height:16px;color:#1b6fb5;transform:scaleX(0.9744);transform-origin:0 0;-webkit-text-stroke:0;">wien</div>
<div style="position:absolute;left:503px;top:8px;width:282px;height:34px;background:#fbfbfb;border-radius:4px;box-shadow:0 0 3px rgba(0,0,0,0.04);"></div>
<svg style="position:absolute;left:510.0px;top:13.9px" width="21" height="21" viewBox="0 0 24 24"><path d="M12 5.69l5 4.5V18h-2v-6H9v6H7v-7.81l5-4.5M12 3L2 12h3v8h6v-6h2v6h6v-8h3L12 3z" fill="#5f5f5f"/></svg>
<svg style="position:absolute;left:584.2px;top:13.6px" width="21.4" height="21.4" viewBox="0 0 24 24"><path d="M9.17 6l2 2H20v10H4V6h5.17M10 4H4c-1.1 0-1.99.9-1.99 2L2 18c0 1.1.9 2 2 2h16c1.1 0 2-.9 2-2V8c0-1.1-.9-2-2-2h-8l-2-2z" fill="#5f5f5f"/></svg>
<div class="t" style="left:537.50px;top:19.60px;font-size:12px;line-height:12px;color:#666;transform:scaleX(0.9027);transform-origin:0 0;">Home</div>
<div class="t" style="left:611.90px;top:19.60px;font-size:12px;line-height:12px;color:#666;transform:scaleX(0.9160);transform-origin:0 0;">Documents</div>
<div style="position:absolute;left:682px;top:11px;width:91px;height:27px;background:#0562a8;border-radius:3px;box-shadow:0 1px 2px rgba(0,0,0,0.25);"></div>
<div style="position:absolute;left:689.8px;top:23.6px;width:13px;height:1.8px;background:#fff;"></div>
<div style="position:absolute;left:695.4px;top:18px;width:1.8px;height:13px;background:#fff;"></div>
<div class="t" style="left:713.00px;top:19.60px;font-size:12px;line-height:12px;color:#fff;transform:scaleX(0.8892);transform-origin:0 0;">Create Job</div>
<div style="position:absolute;left:1237.2px;top:10.1px;width:30.6px;height:27.2px;filter:blur(0.35px)"><div style="position:absolute;left:6.8px;top:0.0px;width:3.5px;height:3.5px;background:#e8d0d0"></div><div style="position:absolute;left:10.2px;top:0.0px;width:3.5px;height:3.5px;background:#dcc0c0"></div><div style="position:absolute;left:13.6px;top:0.0px;width:3.5px;height:3.5px;background:#e0a8a0"></div><div style="position:absolute;left:17.0px;top:0.0px;width:3.5px;height:3.5px;background:#dba8a0"></div><div style="position:absolute;left:20.4px;top:0.0px;width:3.5px;height:3.5px;background:#ecd8d8"></div><div style="position:absolute;left:3.4px;top:3.4px;width:3.5px;height:3.5px;background:#9a8088"></div><div style="position:absolute;left:6.8px;top:3.4px;width:3.5px;height:3.5px;background:#a07868"></div><div style="position:absolute;left:10.2px;top:3.4px;width:3.5px;height:3.5px;background:#a07060"></div><div style="position:absolute;left:13.6px;top:3.4px;width:3.5px;height:3.5px;background:#803838"></div><div style="position:absolute;left:17.0px;top:3.4px;width:3.5px;height:3.5px;background:#702828"></div><div style="position:absolute;left:20.4px;top:3.4px;width:3.5px;height:3.5px;background:#a04838"></div><div style="position:absolute;left:23.8px;top:3.4px;width:3.5px;height:3.5px;background:#e8c8c0"></div><div style="position:absolute;left:0.0px;top:6.8px;width:3.5px;height:3.5px;background:#f0f0f0"></div><div style="position:absolute;left:3.4px;top:6.8px;width:3.5px;height:3.5px;background:#804838"></div><div style="position:absolute;left:6.8px;top:6.8px;width:3.5px;height:3.5px;background:#d8b098"></div><div style="position:absolute;left:10.2px;top:6.8px;width:3.5px;height:3.5px;background:#d0a888"></div><div style="position:absolute;left:13.6px;top:6.8px;width:3.5px;height:3.5px;background:#804030"></div><div style="position:absolute;left:17.0px;top:6.8px;width:3.5px;height:3.5px;background:#502018"></div><div style="position:absolute;left:20.4px;top:6.8px;width:3.5px;height:3.5px;background:#904838"></div><div style="position:absolute;left:23.8px;top:6.8px;width:3.5px;height:3.5px;background:#d06048"></div><div style="position:absolute;left:27.2px;top:6.8px;width:3.5px;height:3.5px;background:#f0e0e0"></div><div style="position:absolute;left:0.0px;top:10.2px;width:3.5px;height:3.5px;background:#e8d8c8"></div><div style="position:absolute;left:3.4px;top:10.2px;width:3.5px;height:3.5px;background:#703830"></div><div style="position:absolute;left:6.8px;top:10.2px;width:3.5px;height:3.5px;background:#d0a890"></div><div style="position:absolute;left:10.2px;top:10.2px;width:3.5px;height:3.5px;background:#d8b098"></div><div style="position:absolute;left:13.6px;top:10.2px;width:3.5px;height:3.5px;background:#b07860"></div><div style="position:absolute;left:17.0px;top:10.2px;width:3.5px;height:3.5px;background:#502018"></div><div style="position:absolute;left:20.4px;top:10.2px;width:3.5px;height:3.5px;background:#602820"></div><div style="position:absolute;left:23.8px;top:10.2px;width:3.5px;height:3.5px;background:#904030"></div><div style="position:absolute;left:27.2px;top:10.2px;width:3.5px;height:3.5px;background:#e0c8c8"></div><div style="position:absolute;left:0.0px;top:13.6px;width:3.5px;height:3.5px;background:#e8e0d8"></div><div style="position:absolute;left:3.4px;top:13.6px;width:3.5px;height:3.5px;background:#704030"></div><div style="position:absolute;left:6.8px;top:13.6px;width:3.5px;height:3.5px;background:#c8a088"></div><div style="position:absolute;left:10.2px;top:13.6px;width:3.5px;height:3.5px;background:#c89878"></div><div style="position:absolute;left:13.6px;top:13.6px;width:3.5px;height:3.5px;background:#b88068"></div><div style="position:absolute;left:17.0px;top:13.6px;width:3.5px;height:3.5px;background:#805040"></div><div style="position:absolute;left:20.4px;top:13.6px;width:3.5px;height:3.5px;background:#401810"></div><div style="position:absolute;left:23.8px;top:13.6px;width:3.5px;height:3.5px;background:#502020"></div><div style="position:absolute;left:27.2px;top:13.6px;width:3.5px;height:3.5px;background:#d0c8d0"></div><div style="position:absolute;left:0.0px;top:17.0px;width:3.5px;height:3.5px;background:#f0f0f0"></div><div style="position:absolute;left:3.4px;top:17.0px;width:3.5px;height:3.5px;background:#d8c0b0"></div><div style="position:absolute;left:6.8px;top:17.0px;width:3.5px;height:3.5px;background:#d0a890"></div><div style="position:absolute;left:10.2px;top:17.0px;width:3.5px;height:3.5px;background:#d8b0a0"></div><div style="position:absolute;left:13.6px;top:17.0px;width:3.5px;height:3.5px;background:#c89080"></div><div style="position:absolute;left:17.0px;top:17.0px;width:3.5px;height:3.5px;background:#d0a088"></div><div style="position:absolute;left:20.4px;top:17.0px;width:3.5px;height:3.5px;background:#503028"></div><div style="position:absolute;left:23.8px;top:17.0px;width:3.5px;height:3.5px;background:#806060"></div><div style="position:absolute;left:27.2px;top:17.0px;width:3.5px;height:3.5px;background:#f0f0f0"></div><div style="position:absolute;left:3.4px;top:20.4px;width:3.5px;height:3.5px;background:#e0d0c0"></div><div style="position:absolute;left:6.8px;top:20.4px;width:3.5px;height:3.5px;background:#d8b098"></div><div style="position:absolute;left:10.2px;top:20.4px;width:3.5px;height:3.5px;background:#c87070"></div><div style="position:absolute;left:13.6px;top:20.4px;width:3.5px;height:3.5px;background:#b05858"></div><div style="position:absolute;left:17.0px;top:20.4px;width:3.5px;height:3.5px;background:#d0a088"></div><div style="position:absolute;left:20.4px;top:20.4px;width:3.5px;height:3.5px;background:#c0a8a0"></div><div style="position:absolute;left:23.8px;top:20.4px;width:3.5px;height:3.5px;background:#f0e8e8"></div><div style="position:absolute;left:3.4px;top:23.8px;width:3.5px;height:3.5px;background:#f0f0f0"></div><div style="position:absolute;left:6.8px;top:23.8px;width:3.5px;height:3.5px;background:#e0d8d0"></div><div style="position:absolute;left:10.2px;top:23.8px;width:3.5px;height:3.5px;background:#d8a898"></div><div style="position:absolute;left:13.6px;top:23.8px;width:3.5px;height:3.5px;background:#c89070"></div><div style="position:absolute;left:17.0px;top:23.8px;width:3.5px;height:3.5px;background:#d0a888"></div><div style="position:absolute;left:20.4px;top:23.8px;width:3.5px;height:3.5px;background:#e8e0d8"></div></div>
<div style="position:absolute;left:1275px;top:19.5px;width:4px;height:3.5px;background:#e2e2e2;"></div>
<div style="position:absolute;left:1275px;top:23px;width:4px;height:4px;background:#a6a6a6;"></div>
</div>
<div id="frame"></div>
</body></html>
